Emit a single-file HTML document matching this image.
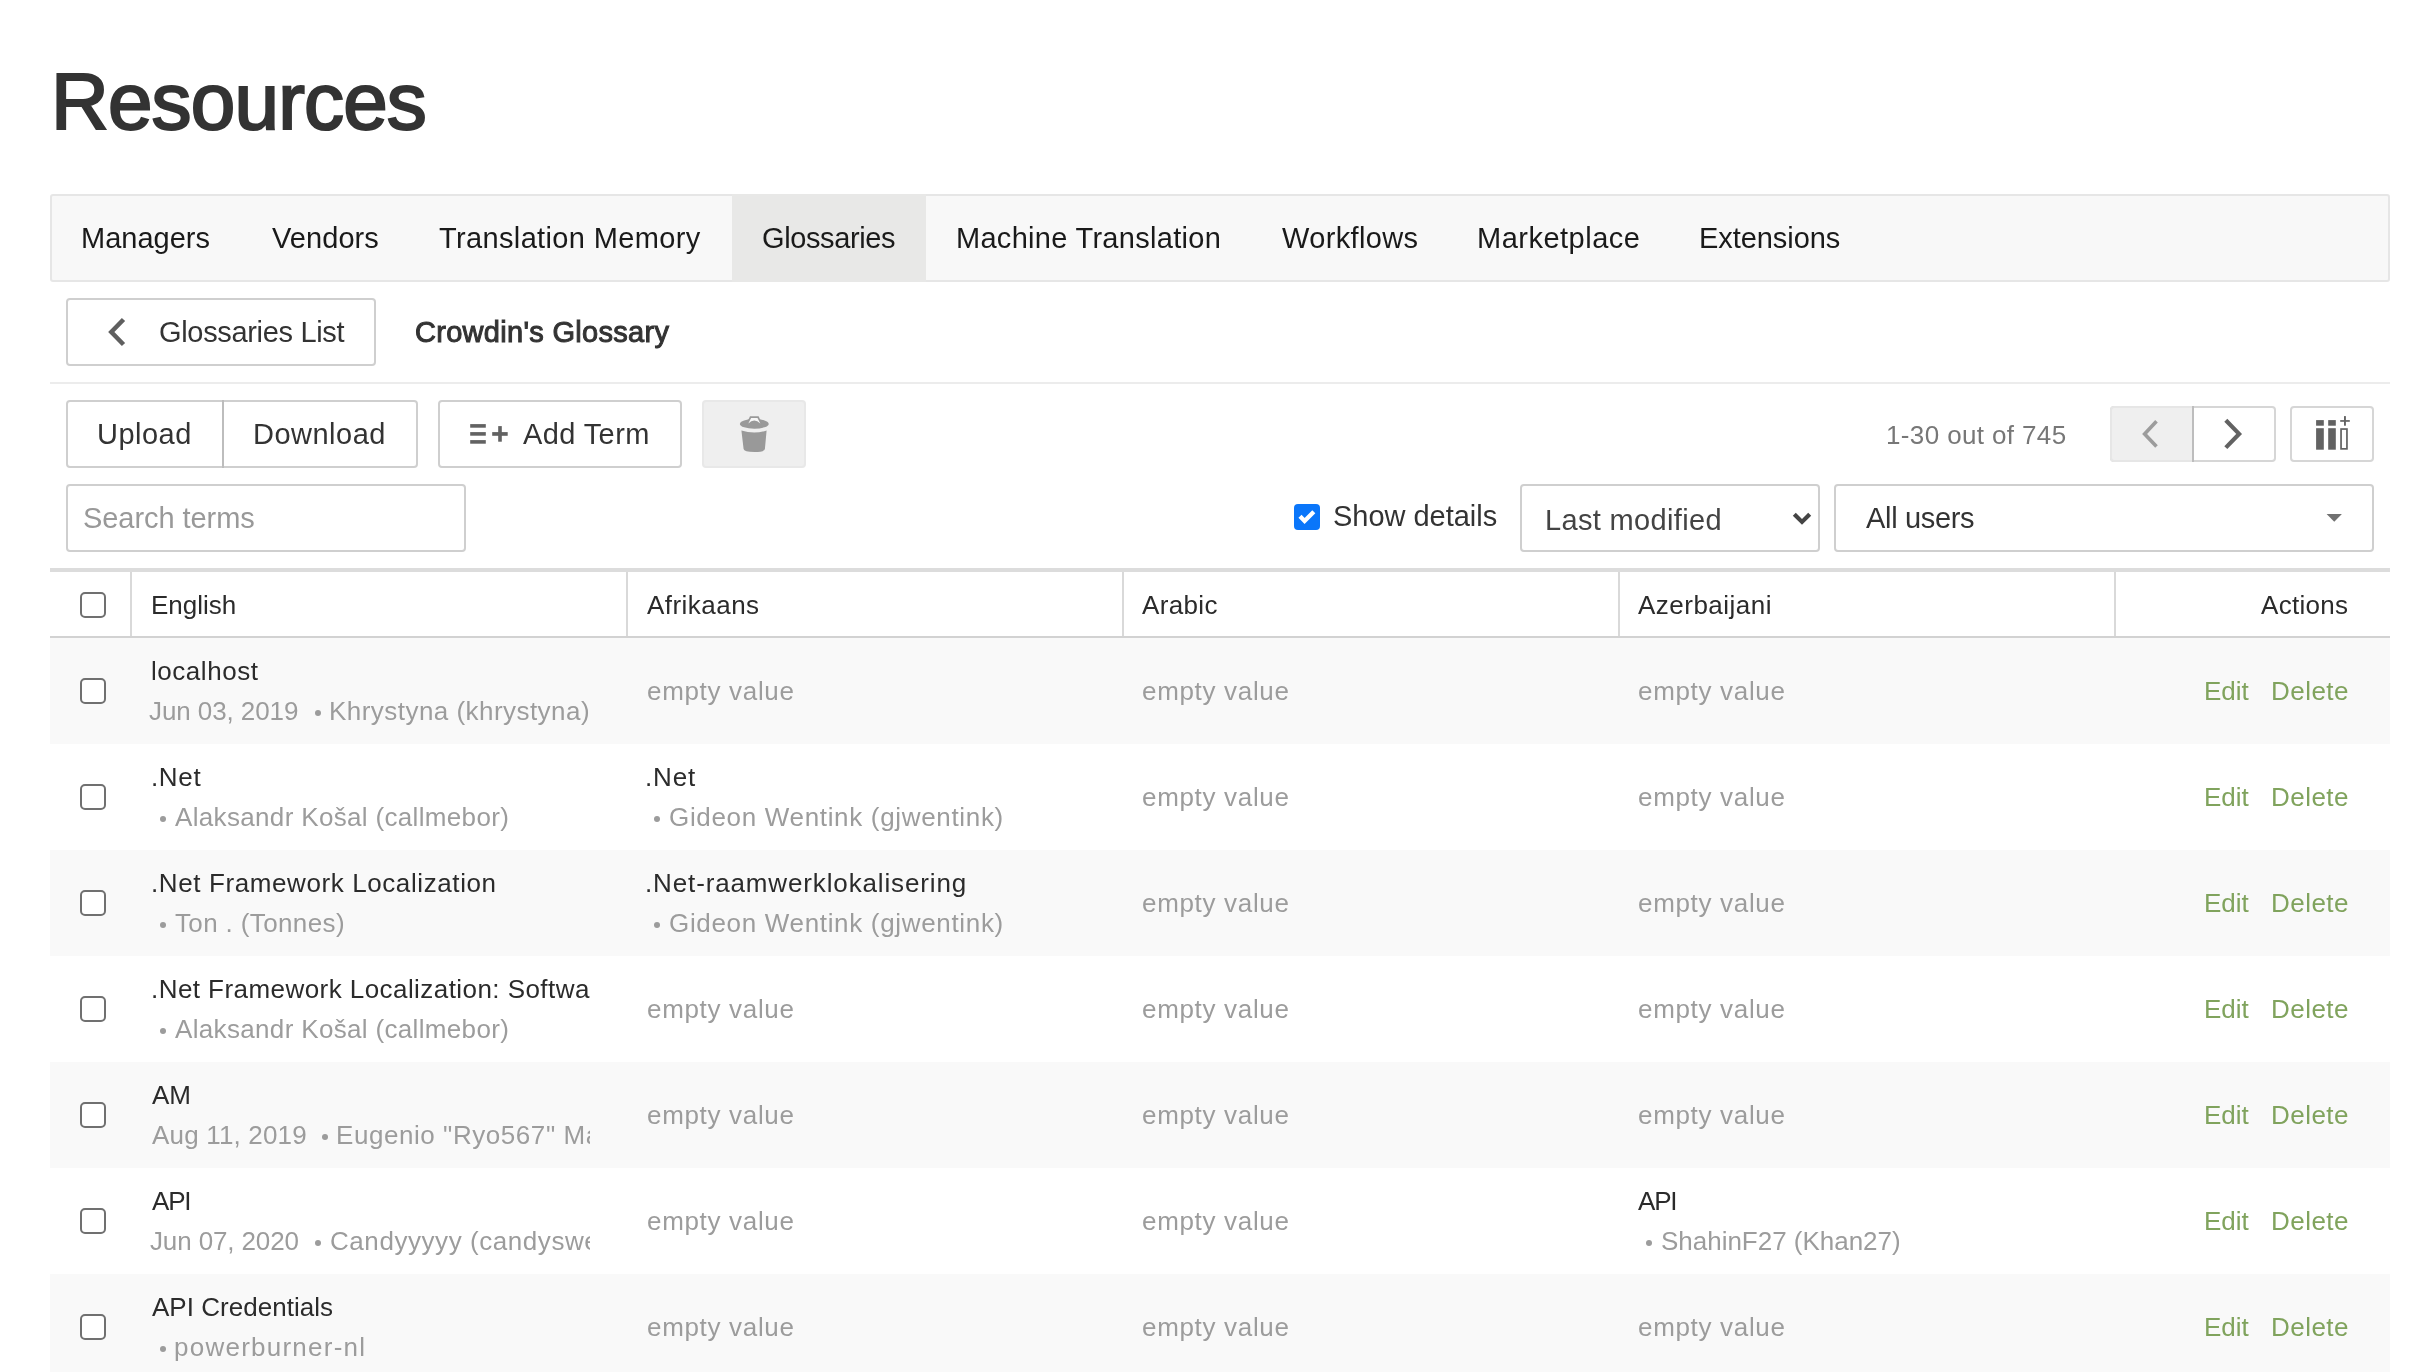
<!DOCTYPE html>
<html><head><meta charset="utf-8">
<style>
html,body{margin:0;padding:0;background:#fff;width:2435px;height:1372px;overflow:hidden;position:relative;font-family:"Liberation Sans",sans-serif;}
.a{position:absolute;box-sizing:border-box;}
.t{position:absolute;white-space:pre;line-height:0;height:0;will-change:transform;}
.t.c{line-height:40px;}
.rowbg{position:absolute;left:50px;width:2340px;height:106px;}
.cb{position:absolute;left:80px;width:26px;height:26px;box-sizing:border-box;border:2px solid #707070;border-radius:5px;background:#fff;}
.bul{position:absolute;width:6px;height:6px;border-radius:50%;background:#9c9c9c;}
.btn{position:absolute;box-sizing:border-box;border:2px solid #cfcfcf;border-radius:4px;background:#fff;}
</style></head><body>
<!-- tab bar -->
<div class="a" style="left:50px;top:194px;width:2340px;height:88px;background:#f8f8f8;border:2px solid #e6e6e6;border-radius:3px;"></div>
<div class="a" style="left:732px;top:194px;width:194px;height:88px;background:#e8e8e7;"></div>
<!-- glossaries list button -->
<div class="btn" style="left:66px;top:298px;width:310px;height:68px;"></div>
<svg class="a" style="left:100px;top:310px" width="34" height="44" viewBox="0 0 34 44"><path d="M23.5 9.5 L11.3 22 L23.5 34.5" fill="none" stroke="#5f5f5f" stroke-width="4.5"/></svg>
<!-- separator -->
<div class="a" style="left:50px;top:382px;width:2340px;height:2px;background:#ececec;"></div>
<!-- upload/download -->
<div class="btn" style="left:66px;top:400px;width:352px;height:68px;"></div>
<div class="a" style="left:222px;top:400px;width:2px;height:68px;background:#bdbdbd;"></div>
<!-- add term -->
<div class="btn" style="left:438px;top:400px;width:244px;height:68px;"></div>
<svg class="a" style="left:468px;top:422px" width="44" height="26" viewBox="0 0 44 26">
<rect x="2.2" y="2.1" width="15.6" height="3.6" fill="#626262"/><rect x="2.2" y="10.1" width="15.6" height="3.6" fill="#626262"/><rect x="2.2" y="18.1" width="15.6" height="3.6" fill="#626262"/>
<rect x="24.2" y="10.1" width="15.5" height="3.7" fill="#626262"/><rect x="30.2" y="4.1" width="3.6" height="15.6" fill="#626262"/></svg>
<!-- trash -->
<div class="a" style="left:702px;top:400px;width:104px;height:68px;background:#efefef;border:2px solid #e8e8e8;border-radius:4px;"></div>
<svg class="a" style="left:736px;top:412px" width="36" height="44" viewBox="0 0 36 44">
<ellipse cx="18.3" cy="11.9" rx="14.4" ry="4.8" fill="#999"/>
<path d="M10.3 12 L14 4.2 L22.6 4.2 L26.3 12 Z" fill="#999"/>
<path d="M12.3 11.6 L15.1 6 L21.5 6 L24.3 11.6 Q18.3 5.3 12.3 11.6 Z" fill="#f7f7f7"/>
<path d="M5.4 18.4 Q18.3 22.6 30.6 18.4 L28.9 37 Q28.6 40 18.3 40 Q8 40 7.6 37 Z" fill="#999"/></svg>
<!-- pagination -->
<div class="a" style="left:2110px;top:406px;width:166px;height:56px;border:2px solid #d6d6d6;border-radius:4px;background:#fff;"></div>
<div class="a" style="left:2110px;top:406px;width:84px;height:56px;background:#efefef;border:2px solid #e6e6e6;border-right:none;border-radius:4px 0 0 4px;"></div>
<div class="a" style="left:2192px;top:406px;width:2px;height:56px;background:#bdbdbd;"></div>
<svg class="a" style="left:2134px;top:414px" width="32" height="40" viewBox="0 0 32 40"><path d="M22.5 7.3 L10.6 19.9 L22.5 32.5" fill="none" stroke="#9c9c9c" stroke-width="3.6"/></svg>
<svg class="a" style="left:2216px;top:414px" width="32" height="40" viewBox="0 0 32 40"><path d="M9.8 6.2 L23.1 19.9 L9.8 33.6" fill="none" stroke="#626262" stroke-width="4.2"/></svg>
<!-- column button -->
<div class="btn" style="left:2290px;top:406px;width:84px;height:56px;border-color:#d6d6d6;"></div>
<svg class="a" style="left:2310px;top:412px" width="44" height="44" viewBox="0 0 44 44">
<rect x="6.1" y="8.1" width="7.7" height="5.6" fill="#626262"/><rect x="6.1" y="16.2" width="7.7" height="21.5" fill="#626262"/>
<rect x="18.2" y="8.1" width="7.6" height="5.6" fill="#626262"/><rect x="18.2" y="16.2" width="7.6" height="21.5" fill="#626262"/>
<rect x="31.05" y="17.05" width="5.9" height="19.8" fill="none" stroke="#626262" stroke-width="1.7"/>
<rect x="30.2" y="8.1" width="9.6" height="1.7" fill="#626262"/><rect x="34" y="4.1" width="1.9" height="9.6" fill="#626262"/></svg>
<!-- search -->
<div class="btn" style="left:66px;top:484px;width:400px;height:68px;"></div>
<!-- checkbox checked -->
<div class="a" style="left:1294px;top:504px;width:26px;height:26px;background:#0a76fa;border-radius:4px;"></div>
<svg class="a" style="left:1294px;top:504px" width="26" height="26" viewBox="0 0 26 26"><path d="M6 12.3 L10.6 17 L19.8 7.8" fill="none" stroke="#fff" stroke-width="4.3"/></svg>
<!-- selects -->
<div class="btn" style="left:1520px;top:484px;width:300px;height:68px;"></div>
<svg class="a" style="left:1788px;top:506px" width="28" height="24" viewBox="0 0 28 24"><path d="M6.3 8.2 L14 15.9 L21.7 8.2" fill="none" stroke="#444" stroke-width="4.2"/></svg>
<div class="btn" style="left:1834px;top:484px;width:540px;height:68px;"></div>
<svg class="a" style="left:2322px;top:510px" width="24" height="16" viewBox="0 0 24 16"><path d="M4.6 4 L19.9 4 L12.25 11.8 Z" fill="#717171"/></svg>
<!-- table header -->
<div class="a" style="left:50px;top:568px;width:2340px;height:4px;background:#dcdcdc;"></div>
<div class="a" style="left:50px;top:636px;width:2340px;height:2px;background:#d2d2d2;"></div>
<div class="a" style="left:130px;top:572px;width:2px;height:64px;background:#d9d9d9;"></div>
<div class="a" style="left:626px;top:572px;width:2px;height:64px;background:#d9d9d9;"></div>
<div class="a" style="left:1122px;top:572px;width:2px;height:64px;background:#d9d9d9;"></div>
<div class="a" style="left:1618px;top:572px;width:2px;height:64px;background:#d9d9d9;"></div>
<div class="a" style="left:2114px;top:572px;width:2px;height:64px;background:#d9d9d9;"></div>
<div class="cb" style="top:592px"></div>
<div class="rowbg" style="top:638px;background:#f9f9f9"></div><div class="cb" style="top:678px"></div><div class="rowbg" style="top:744px;background:#ffffff"></div><div class="cb" style="top:784px"></div><div class="rowbg" style="top:850px;background:#f9f9f9"></div><div class="cb" style="top:890px"></div><div class="rowbg" style="top:956px;background:#ffffff"></div><div class="cb" style="top:996px"></div><div class="rowbg" style="top:1062px;background:#f9f9f9"></div><div class="cb" style="top:1102px"></div><div class="rowbg" style="top:1168px;background:#ffffff"></div><div class="cb" style="top:1208px"></div><div class="rowbg" style="top:1274px;background:#f9f9f9"></div><div class="cb" style="top:1314px"></div>
<div class="bul" style="left:314.6px;top:709.5px"></div><div class="bul" style="left:159.9px;top:815.5px"></div><div class="bul" style="left:654.3px;top:815.5px"></div><div class="bul" style="left:160.0px;top:921.5px"></div><div class="bul" style="left:654.3px;top:921.5px"></div><div class="bul" style="left:160.0px;top:1027.5px"></div><div class="bul" style="left:321.7px;top:1133.5px"></div><div class="bul" style="left:314.8px;top:1239.5px"></div><div class="bul" style="left:1646.2px;top:1239.5px"></div><div class="bul" style="left:160.0px;top:1345.5px"></div>
<div class="t" style="left:51.10px;top:102.00px;font-size:80px;color:#333333;letter-spacing:-0.823px;-webkit-text-stroke:2.2px #333333">Resources</div>
<div class="t" style="left:80.70px;top:238.00px;font-size:29px;color:#1a1a1a;letter-spacing:0.006px">Managers</div>
<div class="t" style="left:271.60px;top:238.00px;font-size:29px;color:#1a1a1a;letter-spacing:0.064px">Vendors</div>
<div class="t" style="left:439.20px;top:238.00px;font-size:29px;color:#1a1a1a;letter-spacing:0.355px">Translation Memory</div>
<div class="t" style="left:762.00px;top:238.00px;font-size:29px;color:#1a1a1a;letter-spacing:-0.387px">Glossaries</div>
<div class="t" style="left:955.50px;top:238.00px;font-size:29px;color:#1a1a1a;letter-spacing:0.293px">Machine Translation</div>
<div class="t" style="left:1281.90px;top:238.00px;font-size:29px;color:#1a1a1a;letter-spacing:0.349px">Workflows</div>
<div class="t" style="left:1477.40px;top:238.00px;font-size:29px;color:#1a1a1a;letter-spacing:0.497px">Marketplace</div>
<div class="t" style="left:1699.20px;top:238.00px;font-size:29px;color:#1a1a1a;letter-spacing:-0.062px">Extensions</div>
<div class="t" style="left:158.50px;top:332.00px;font-size:29px;color:#333333;letter-spacing:-0.330px">Glossaries List</div>
<div class="t" style="left:414.90px;top:332.00px;font-size:29px;color:#333333;letter-spacing:0.295px;-webkit-text-stroke:1.0px #333333">Crowdin's Glossary</div>
<div class="t" style="left:96.50px;top:434.00px;font-size:29px;color:#333333;letter-spacing:0.486px">Upload</div>
<div class="t" style="left:253.10px;top:434.00px;font-size:29px;color:#333333;letter-spacing:0.494px">Download</div>
<div class="t" style="left:522.50px;top:434.00px;font-size:29px;color:#333333;letter-spacing:0.394px">Add Term</div>
<div class="t" style="left:1885.70px;top:435.00px;font-size:26px;color:#777777;letter-spacing:0.375px">1-30 out of 745</div>
<div class="t" style="left:83.30px;top:518.00px;font-size:29px;color:#999999;letter-spacing:-0.058px">Search terms</div>
<div class="t" style="left:1333.20px;top:516.00px;font-size:29px;color:#333333;letter-spacing:-0.021px">Show details</div>
<div class="t" style="left:1545.00px;top:520.00px;font-size:29px;color:#444444;letter-spacing:0.345px">Last modified</div>
<div class="t" style="left:1866.00px;top:518.00px;font-size:29px;color:#333333;letter-spacing:-0.325px">All users</div>
<div class="t" style="left:151.40px;top:605.00px;font-size:26px;color:#2b2b2b;letter-spacing:-0.019px">English</div>
<div class="t" style="left:646.80px;top:605.00px;font-size:26px;color:#2b2b2b;letter-spacing:0.465px">Afrikaans</div>
<div class="t" style="left:1142.30px;top:605.00px;font-size:26px;color:#2b2b2b;letter-spacing:0.341px">Arabic</div>
<div class="t" style="left:1638.00px;top:605.00px;font-size:26px;color:#2b2b2b;letter-spacing:0.485px">Azerbaijani</div>
<div class="t" style="left:2261.10px;top:605.00px;font-size:26px;color:#2b2b2b;letter-spacing:0.290px">Actions</div>
<div class="t" style="left:151.30px;top:671.00px;font-size:26px;color:#2b2b2b;letter-spacing:0.538px">localhost</div>
<div class="t" style="left:149.40px;top:711.00px;font-size:26px;color:#9c9c9c;letter-spacing:-0.090px">Jun 03, 2019</div>
<div class="t" style="left:328.80px;top:711.00px;font-size:26px;color:#9c9c9c;letter-spacing:0.458px">Khrystyna (khrystyna)</div>
<div class="t" style="left:150.50px;top:777.00px;font-size:26px;color:#2b2b2b;letter-spacing:0.647px">.Net</div>
<div class="t" style="left:175.10px;top:817.00px;font-size:26px;color:#9c9c9c;letter-spacing:0.336px">Alaksandr Košal (callmebor)</div>
<div class="t" style="left:645.00px;top:777.00px;font-size:26px;color:#2b2b2b;letter-spacing:0.847px">.Net</div>
<div class="t" style="left:669.40px;top:817.00px;font-size:26px;color:#9c9c9c;letter-spacing:0.672px">Gideon Wentink (gjwentink)</div>
<div class="t" style="left:150.50px;top:883.00px;font-size:26px;color:#2b2b2b;letter-spacing:0.600px">.Net Framework Localization</div>
<div class="t" style="left:175.00px;top:923.00px;font-size:26px;color:#9c9c9c;letter-spacing:0.370px">Ton . (Tonnes)</div>
<div class="t" style="left:645.30px;top:883.00px;font-size:26px;color:#2b2b2b;letter-spacing:0.863px">.Net-raamwerklokalisering</div>
<div class="t" style="left:669.40px;top:923.00px;font-size:26px;color:#9c9c9c;letter-spacing:0.672px">Gideon Wentink (gjwentink)</div>
<div class="t" style="left:150.50px;top:989.00px;font-size:26px;color:#2b2b2b;letter-spacing:0.440px">.Net Framework Localization: Softwa</div>
<div class="t" style="left:175.10px;top:1029.00px;font-size:26px;color:#9c9c9c;letter-spacing:0.336px">Alaksandr Košal (callmebor)</div>
<div class="t" style="left:152.00px;top:1095.00px;font-size:26px;color:#2b2b2b;letter-spacing:-0.042px">AM</div>
<div class="t" style="left:151.50px;top:1135.00px;font-size:26px;color:#9c9c9c;letter-spacing:0.172px">Aug 11, 2019</div>
<div class="t c" style="left:336.40px;top:1135.00px;font-size:26px;color:#9c9c9c;letter-spacing:0.560px;width:253.60px;overflow:hidden;height:40px;line-height:40px;top:1115.00px">Eugenio "Ryo567" Martinez</div>
<div class="t" style="left:152.00px;top:1201.00px;font-size:26px;color:#2b2b2b;letter-spacing:-1.192px">API</div>
<div class="t" style="left:149.70px;top:1241.00px;font-size:26px;color:#9c9c9c;letter-spacing:-0.126px">Jun 07, 2020</div>
<div class="t c" style="left:329.90px;top:1241.00px;font-size:26px;color:#9c9c9c;letter-spacing:0.560px;width:260.10px;overflow:hidden;height:40px;line-height:40px;top:1221.00px">Candyyyyy (candysweet)</div>
<div class="t" style="left:1637.90px;top:1201.00px;font-size:26px;color:#2b2b2b;letter-spacing:-1.192px">API</div>
<div class="t" style="left:1660.90px;top:1241.00px;font-size:26px;color:#9c9c9c;letter-spacing:-0.017px">ShahinF27 (Khan27)</div>
<div class="t" style="left:152.00px;top:1307.00px;font-size:26px;color:#2b2b2b;letter-spacing:0.026px">API Credentials</div>
<div class="t" style="left:174.00px;top:1347.00px;font-size:26px;color:#9c9c9c;letter-spacing:1.247px">powerburner-nl</div>
<div class="t" style="left:646.80px;top:691.00px;font-size:26px;color:#9c9c9c;letter-spacing:0.678px">empty value</div>
<div class="t" style="left:1142.30px;top:691.00px;font-size:26px;color:#9c9c9c;letter-spacing:0.678px">empty value</div>
<div class="t" style="left:1637.80px;top:691.00px;font-size:26px;color:#9c9c9c;letter-spacing:0.678px">empty value</div>
<div class="t" style="left:2204.40px;top:691.00px;font-size:26px;color:#80a35d;letter-spacing:-0.026px">Edit</div>
<div class="t" style="left:2271.00px;top:691.00px;font-size:26px;color:#80a35d;letter-spacing:0.461px">Delete</div>
<div class="t" style="left:1142.30px;top:797.00px;font-size:26px;color:#9c9c9c;letter-spacing:0.678px">empty value</div>
<div class="t" style="left:1637.80px;top:797.00px;font-size:26px;color:#9c9c9c;letter-spacing:0.678px">empty value</div>
<div class="t" style="left:2204.40px;top:797.00px;font-size:26px;color:#80a35d;letter-spacing:-0.026px">Edit</div>
<div class="t" style="left:2271.00px;top:797.00px;font-size:26px;color:#80a35d;letter-spacing:0.461px">Delete</div>
<div class="t" style="left:1142.30px;top:903.00px;font-size:26px;color:#9c9c9c;letter-spacing:0.678px">empty value</div>
<div class="t" style="left:1637.80px;top:903.00px;font-size:26px;color:#9c9c9c;letter-spacing:0.678px">empty value</div>
<div class="t" style="left:2204.40px;top:903.00px;font-size:26px;color:#80a35d;letter-spacing:-0.026px">Edit</div>
<div class="t" style="left:2271.00px;top:903.00px;font-size:26px;color:#80a35d;letter-spacing:0.461px">Delete</div>
<div class="t" style="left:646.80px;top:1009.00px;font-size:26px;color:#9c9c9c;letter-spacing:0.678px">empty value</div>
<div class="t" style="left:1142.30px;top:1009.00px;font-size:26px;color:#9c9c9c;letter-spacing:0.678px">empty value</div>
<div class="t" style="left:1637.80px;top:1009.00px;font-size:26px;color:#9c9c9c;letter-spacing:0.678px">empty value</div>
<div class="t" style="left:2204.40px;top:1009.00px;font-size:26px;color:#80a35d;letter-spacing:-0.026px">Edit</div>
<div class="t" style="left:2271.00px;top:1009.00px;font-size:26px;color:#80a35d;letter-spacing:0.461px">Delete</div>
<div class="t" style="left:646.80px;top:1115.00px;font-size:26px;color:#9c9c9c;letter-spacing:0.678px">empty value</div>
<div class="t" style="left:1142.30px;top:1115.00px;font-size:26px;color:#9c9c9c;letter-spacing:0.678px">empty value</div>
<div class="t" style="left:1637.80px;top:1115.00px;font-size:26px;color:#9c9c9c;letter-spacing:0.678px">empty value</div>
<div class="t" style="left:2204.40px;top:1115.00px;font-size:26px;color:#80a35d;letter-spacing:-0.026px">Edit</div>
<div class="t" style="left:2271.00px;top:1115.00px;font-size:26px;color:#80a35d;letter-spacing:0.461px">Delete</div>
<div class="t" style="left:646.80px;top:1221.00px;font-size:26px;color:#9c9c9c;letter-spacing:0.678px">empty value</div>
<div class="t" style="left:1142.30px;top:1221.00px;font-size:26px;color:#9c9c9c;letter-spacing:0.678px">empty value</div>
<div class="t" style="left:2204.40px;top:1221.00px;font-size:26px;color:#80a35d;letter-spacing:-0.026px">Edit</div>
<div class="t" style="left:2271.00px;top:1221.00px;font-size:26px;color:#80a35d;letter-spacing:0.461px">Delete</div>
<div class="t" style="left:646.80px;top:1327.00px;font-size:26px;color:#9c9c9c;letter-spacing:0.678px">empty value</div>
<div class="t" style="left:1142.30px;top:1327.00px;font-size:26px;color:#9c9c9c;letter-spacing:0.678px">empty value</div>
<div class="t" style="left:1637.80px;top:1327.00px;font-size:26px;color:#9c9c9c;letter-spacing:0.678px">empty value</div>
<div class="t" style="left:2204.40px;top:1327.00px;font-size:26px;color:#80a35d;letter-spacing:-0.026px">Edit</div>
<div class="t" style="left:2271.00px;top:1327.00px;font-size:26px;color:#80a35d;letter-spacing:0.461px">Delete</div>
</body></html>
